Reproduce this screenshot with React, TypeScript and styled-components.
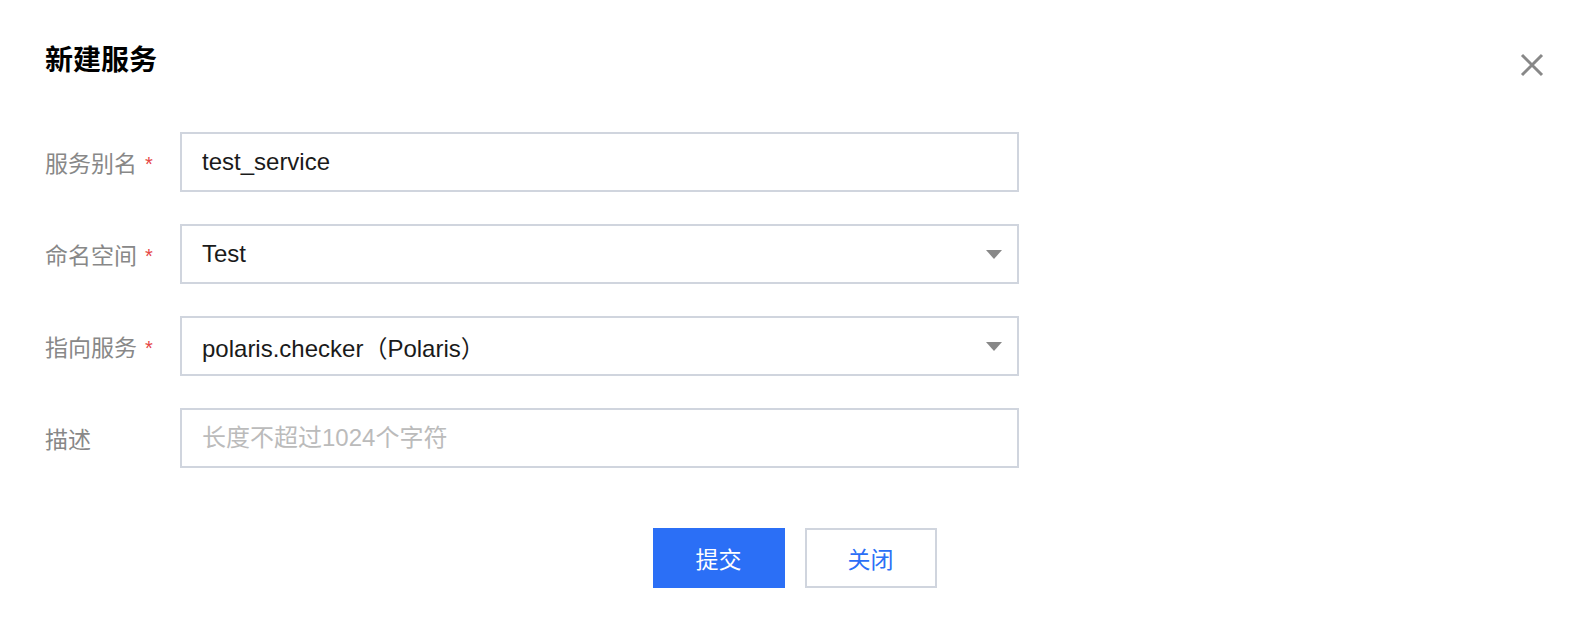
import React from 'react';
import styled, { createGlobalStyle } from 'styled-components';

const GlobalStyle = createGlobalStyle`
  html, body {
    margin: 0;
    padding: 0;
    background: #fff;
  }
  body {
    font-family: "Liberation Sans", "Noto Sans CJK SC", sans-serif;
    color: #000;
  }
`;

const Dialog = styled.div`
  box-sizing: border-box;
  width: 1592px;
  height: 632px;
  padding: 41px 48px 0 45px;
`;

const Header = styled.div`
  display: flex;
  justify-content: space-between;
  align-items: flex-start;
`;

const Title = styled.h2`
  margin: 0;
  font-size: 28px;
  line-height: 40px;
  font-weight: 700;
  color: #000;
`;

const CloseButton = styled.button`
  margin-top: 12px;
  padding: 0;
  border: 0;
  background: none;
  width: 24px;
  height: 24px;
  cursor: pointer;
  display: flex;
`;

const Form = styled.div`
  margin-top: 51px;
  display: flex;
  flex-direction: column;
  gap: 32px;
`;

const Row = styled.div`
  display: flex;
  align-items: center;
`;

const Label = styled.label`
  width: 135px;
  flex-shrink: 0;
  display: flex;
  align-items: center;
  font-size: 23px;
  color: #888;
`;

const Required = styled.span`
  margin-left: 8px;
  color: #e54545;
  font-size: 20px;
  line-height: 1;
  position: relative;
  top: 2px;
`;

const fieldBase = `
  box-sizing: border-box;
  width: 839px;
  height: 60px;
  border: 2px solid #d0d5de;
  background: #fff;
  padding: 0 20px;
  font-family: "Liberation Sans", "Noto Sans CJK SC", sans-serif;
  font-size: 24px;
  color: #1a1a1a;
`;

const TextInput = styled.input`
  ${fieldBase}
  outline: none;

  &::placeholder {
    color: #bbb;
  }
`;

const Select = styled.div`
  ${fieldBase}
  display: flex;
  align-items: center;
  justify-content: space-between;
  padding-right: 15px;
  cursor: pointer;
`;

const Caret = styled.span`
  width: 0;
  height: 0;
  border-left: 8px solid transparent;
  border-right: 8px solid transparent;
  border-top: 9px solid #888;
`;

const Footer = styled.div`
  margin-top: 60px;
  display: flex;
  justify-content: center;
  gap: 20px;
`;

const Button = styled.button<{ primary?: boolean }>`
  box-sizing: border-box;
  width: 132px;
  height: 60px;
  font-family: "Liberation Sans", "Noto Sans CJK SC", sans-serif;
  font-size: 23px;
  cursor: pointer;
  border: 2px solid ${({ primary }) => (primary ? '#2b6ff6' : '#d0d5de')};
  background: ${({ primary }) => (primary ? '#2b6ff6' : '#fff')};
  color: ${({ primary }) => (primary ? '#fff' : '#2b6ff6')};
`;

const CloseIcon = () => (
  <svg width="24" height="24" viewBox="0 0 24 24">
    <path d="M2 2 L22 22 M22 2 L2 22" stroke="#888" strokeWidth="3" fill="none" />
  </svg>
);

export default function App() {
  return (
    <>
      <GlobalStyle />
      <Dialog>
        <Header>
          <Title>新建服务</Title>
          <CloseButton aria-label="关闭">
            <CloseIcon />
          </CloseButton>
        </Header>
        <Form>
          <Row>
            <Label>
              服务别名<Required>*</Required>
            </Label>
            <TextInput defaultValue="test_service" />
          </Row>
          <Row>
            <Label>
              命名空间<Required>*</Required>
            </Label>
            <Select>
              <span>Test</span>
              <Caret />
            </Select>
          </Row>
          <Row>
            <Label>
              指向服务<Required>*</Required>
            </Label>
            <Select>
              <span>polaris.checker（Polaris）</span>
              <Caret />
            </Select>
          </Row>
          <Row>
            <Label>描述</Label>
            <TextInput placeholder="长度不超过1024个字符" />
          </Row>
        </Form>
        <Footer>
          <Button primary>提交</Button>
          <Button>关闭</Button>
        </Footer>
      </Dialog>
    </>
  );
}
